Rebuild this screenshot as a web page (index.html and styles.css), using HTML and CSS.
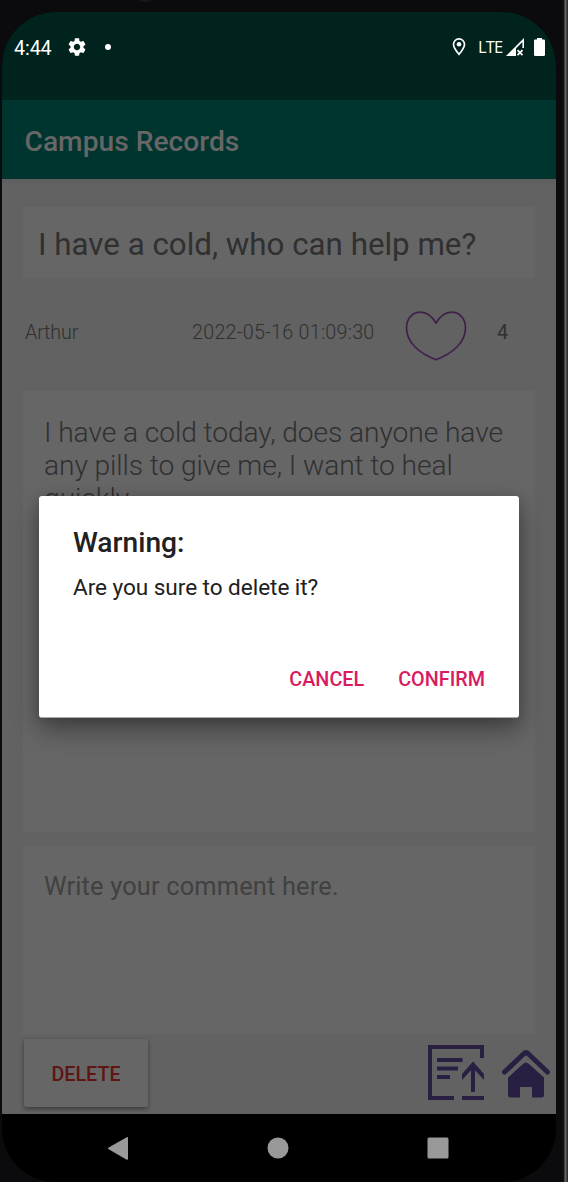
FILE: index.html
```html
<!DOCTYPE html>
<html lang="en">
<head>
<meta charset="utf-8">
<title>Campus Records</title>
<link rel="stylesheet" href="styles.css">
</head>
<body>
<div class="device">
  <div class="camera"></div>
  <div class="screen">
    <header class="status">
      <div class="status-left">
        <span class="clock">4:44</span>
        <svg class="gear" viewBox="2 2 20 20"><path fill="#fff" d="M19.14 12.94c.04-.3.06-.61.06-.94 0-.32-.02-.64-.07-.94l2.03-1.58c.18-.14.23-.41.12-.61l-1.92-3.32c-.12-.22-.37-.29-.59-.22l-2.39.96c-.5-.38-1.03-.7-1.62-.94l-.36-2.54c-.04-.24-.24-.41-.48-.41h-3.84c-.24 0-.43.17-.47.41l-.36 2.54c-.59.24-1.13.57-1.62.94l-2.39-.96c-.22-.08-.47 0-.59.22L2.74 8.87c-.12.21-.08.47.12.61l2.03 1.58c-.05.3-.09.63-.09.94s.02.64.07.94l-2.03 1.58c-.18.14-.23.41-.12.61l1.92 3.32c.12.22.37.29.59.22l2.39-.96c.5.38 1.03.7 1.62.94l.36 2.54c.05.24.24.41.48.41h3.84c.24 0 .44-.17.47-.41l.36-2.54c.59-.24 1.13-.56 1.62-.94l2.39.96c.22.08.47 0 .59-.22l1.92-3.32c.12-.22.07-.47-.12-.61l-2.01-1.58zM12 15.6c-1.98 0-3.6-1.62-3.6-3.6s1.62-3.6 3.6-3.6 3.6 1.62 3.6 3.6-1.62 3.6-3.6 3.6z"/></svg>
        <span class="dot"></span>
      </div>
      <div class="status-right">
        <svg class="pin" viewBox="0 0 14 18"><path fill="none" stroke="#fff" stroke-width="1.7" d="M7 16.3C4.6 13.4 1.5 9.6 1.5 6.400a5.5 5.500 0 0 1 11 0C12.500 9.600 9.400 13.400 7 16.300z"/><circle cx="7" cy="6.300" r="2.300" fill="#fff"/></svg>
        <span class="lte">LTE</span>
        <svg class="signal" viewBox="0 0 18 18"><path fill="#fff" d="M0 18L18 0v10h-1.600V4L10 10.500V18z"/><path d="M11.500 12.200l5 5m0-5l-5 5" stroke="#fff" stroke-width="1.800"/></svg>
        <svg class="battery" viewBox="0 0 11 18"><path fill="#fff" d="M3 0h5v1.500h1.700A1.300 1.300 0 0 1 11 2.800v13.900a1.300 1.300 0 0 1-1.300 1.300H1.300A1.300 1.300 0 0 1 0 16.700V2.800a1.300 1.300 0 0 1 1.300-1.300H3z"/></svg>
      </div>
    </header>
    <div class="appbar">Campus Records</div>
    <main class="content">
      <h1 class="card title">I have a cold, who can help me?</h1>
      <div class="meta">
        <span class="author">Arthur</span>
        <span class="date">2022-05-16 01:09:30</span>
        <svg class="heart" viewBox="0 0 62 52"><path fill="none" stroke="#40204b" stroke-width="1.700" d="M31 13C27.500 7.500 22 2.200 15.500 2.200 7 2.200 1.500 9 1.500 18 1.500 32 14 43.500 31 49.700 48 43.500 60.500 32 60.500 18 60.500 9 55 2.200 46.500 2.200 40 2.200 34.500 7.500 31 13z"/></svg>
        <span class="likes">4</span>
      </div>
      <div class="card post">I have a cold today, does anyone have any pills to give me, I want to heal quickly.</div>
      <div class="card comment">Write your comment here.</div>
      <div class="actions">
        <div class="delete">DELETE</div>
        <svg class="send" viewBox="0 0 56 56"><path fill="none" stroke="#281f43" stroke-width="4" d="M26 53H2V2h52v11M34 53h22M9 15h25.500M9 23.500h21M9 32h13M45 47V20"/><path fill="#281f43" d="M45 16.500l11 12.500v6L45 23 34 35v-6z"/></svg>
        <svg class="home" viewBox="0 0 50 50"><path fill="none" stroke="#281f43" stroke-width="5" stroke-linecap="round" stroke-linejoin="round" d="M3.500 24L22.500 6q2.500-2.500 5 0L46.500 24"/><path fill="#281f43" d="M22 16q3-3 6 0l15 13.500V47q0 2.500-2.500 2.500H31V40q0-1-1-1H20q-1 0-1 1v9.500H9.500Q7 49.500 7 47V29.500z"/></svg>
      </div>
    </main>
    <nav class="nav">
      <svg viewBox="0 0 24 24"><path fill="#999" d="M20.300 1.400q1.700-1 1.700 1v20q0 2-1.700 1L2.700 13.200q-1.400-.9 0-1.800z"/></svg>
      <svg viewBox="0 0 24 24"><circle cx="12" cy="12" r="10.500" fill="#999"/></svg>
      <svg viewBox="0 0 24 24"><rect x="1.500" y="1.500" width="21" height="21" rx="1.500" fill="#999"/></svg>
    </nav>
  </div>
  <section class="dialog">
    <h2>Warning:</h2>
    <p>Are you sure to delete it?</p>
    <div class="buttons"><span class="cancel">CANCEL</span><span class="confirm">CONFIRM</span></div>
  </section>
</div>
</body>
</html>
```
FILE: styles.css
```css
* { box-sizing: border-box; }
body { margin: 0; font-family: Roboto, sans-serif; background: #0a090a; }
h1, h2, p { margin: 0; font-weight: 400; }
svg { display: block; flex: none; }
.device {
  position: relative; width: 568px; height: 1182px; padding: 12px 12px 0 2px; overflow: hidden;
  background: linear-gradient(90deg, #0b0a0c 0 563px, #1b1a1b 564px, #66625f 565px 566px, #302e2d 567px);
}
.camera { position: absolute; left: 134px; top: -16px; width: 22px; height: 18px; border-radius: 50%; background: #18181a; }
.screen { display: flex; flex-direction: column; height: 1170px; border-radius: 54px; overflow: hidden; background: #000; }
.status { height: 88px; padding: 24px 11px 0 12px; display: flex; justify-content: space-between; align-items: flex-start; background: #00231d; color: #fff; }
.status-left, .status-right { display: flex; align-items: center; height: 22px; }
.clock { width: 54px; padding-top: 3px; font-size: 19.700px; line-height: 24px; letter-spacing: -.1px; }
.gear { width: 18px; height: 18px; }
.dot { width: 6px; height: 6px; border-radius: 50%; background: #fff; margin-left: 19px; }
.pin { width: 14px; height: 18px; }
.lte { width: 28px; margin-left: 12px; font-size: 16.500px; line-height: 22px; font-family: "Open Sans", sans-serif; letter-spacing: -.8px; }
.signal { width: 18px; height: 18px; }
.battery { width: 11px; height: 18px; margin-left: 10px; }
.appbar { height: 79px; padding-left: 22.500px; font-size: 28.200px; font-weight: 500; line-height: 83px; color: #666; background: #00352f; }
.content { height: 935px; padding: 28px 21px 0; background: linear-gradient(#5d5d5d, #626262 6px); }
.card { background: #666; }
.title { height: 71px; padding-left: 15px; font-size: 31.300px; line-height: 75px; color: #303030; }
.meta { height: 113px; padding: 2px 0 0 2px; display: flex; align-items: center; font-size: 19.700px; font-weight: 300; color: #303030; }
.author { width: 167px; padding-bottom: 6px; letter-spacing: -.15px; }
.date { width: 213px; padding-bottom: 6px; white-space: nowrap; letter-spacing: .28px; }
.heart { width: 62px; height: 52px; }
.likes { margin-left: 30px; padding-bottom: 6px; font-weight: 400; }
.post { height: 441px; padding: 25px 21px; font-size: 28.200px; font-weight: 300; line-height: 33px; letter-spacing: -.09px; color: #303030; }
.comment { height: 188px; margin-top: 14px; padding: 24px 21px; font-size: 25.400px; line-height: 32px; letter-spacing: .17px; color: #414141; }
.actions { display: flex; margin-right: -21px; padding-top: 5px; }
.delete { width: 124px; height: 68px; margin-left: 1px; text-align: center; font-size: 19.700px; font-weight: 500; line-height: 72px; color: #5f1511; background: #666; box-shadow: 0 2px 4px #3a3a3a; border-radius: 2px; }
.send { width: 56px; height: 56px; margin: 6px 0 0 280px; }
.home { width: 50px; height: 50px; margin: 9px 0 0 17px; }
.nav { height: 68px; padding: 0 106px 0 104px; display: flex; justify-content: space-between; align-items: center; background: #000; }
.nav svg { width: 24px; height: 24px; }
.dialog { position: absolute; left: 39px; top: 496px; width: 480px; height: 222px; padding: 30px 34px 0; border-radius: 3px; background: #fff; color: #212121; border-bottom: 1px solid #aaa; box-shadow: 0 12px 26px rgba(0,0,0,.36), 0 2px 12px rgba(0,0,0,.15); }
.dialog h2 { font-size: 28.200px; line-height: 33px; font-weight: 500; }
.dialog p { margin-top: 15px; font-size: 22.600px; line-height: 27px; letter-spacing: -.06px; }
.buttons { margin-top: 67px; display: flex; justify-content: flex-end; gap: 34px; font-size: 19.800px; font-weight: 500; line-height: 24px; color: #d81b60; }
```
